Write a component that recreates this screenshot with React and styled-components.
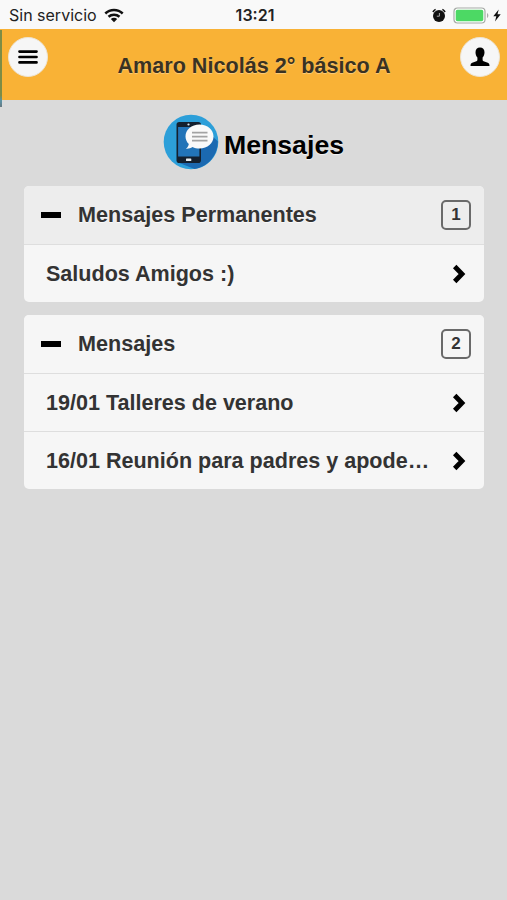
import React from "react";
import styled, { createGlobalStyle } from "styled-components";

const groups = [
  {
    title: "Mensajes Permanentes",
    active: true,
    items: ["Saludos Amigos :)"],
    count: 1,
  },
  {
    title: "Mensajes",
    active: false,
    items: ["19/01 Talleres de verano", "16/01 Reunión para padres y apode…"],
    count: 2,
  },
];

const WifiIcon = () => (
  <svg width="20" height="15" viewBox="0 0 20 15">
    <g fill="none" stroke="#111" strokeWidth="2.5">
      <path d="M1.3 5.5C6.2.8 13.8.8 18.7 5.5" />
      <path d="M4.5 8.8c3.2-2.9 7.8-2.9 11 0" />
    </g>
    <path d="M6.8 10.9c1.9-1.6 4.5-1.6 6.4 0L10 14.2z" fill="#111" />
  </svg>
);

const AlarmIcon = () => (
  <svg width="14" height="15" viewBox="0 0 14 15">
    <path
      d="M.9 4A7 7 0 0 1 3.6 1.4M10.4 1.4A7 7 0 0 1 13.100 4"
      fill="none"
      stroke="#111"
      strokeWidth="1.5"
    />
    <circle cx="7" cy="8" r="6" fill="#111" />
    <path d="M7.4 5v3.2H4.8" fill="none" stroke="#aaa" strokeWidth="1" />
  </svg>
);

const BatteryIcon = () => (
  <svg width="37" height="17" viewBox="0 0 37 17">
    <rect x="1" y="1" width="31" height="15" rx="3.5" fill="#fff" stroke="#a5aaa5" strokeWidth="1.2" />
    <rect x="2.7" y="2.8" width="27.6" height="11.4" rx="1.8" fill="#4cd964" />
    <path d="M34 6c1.8.7 1.8 4.3 0 5z" fill="#aaa" />
  </svg>
);

const BoltIcon = () => (
  <svg width="8" height="13" viewBox="0 0 8 13">
    <path d="M5.7.6L.3 7.3h3L2 12.6l5.7-7.3H4.5z" fill="#111" />
  </svg>
);

const MenuIcon = () => (
  <svg width="20" height="16" viewBox="0 0 20 16">
    <path d="M1.5 2.6h17M1.5 8h17M1.5 13.4h17" stroke="#000" strokeWidth="2.7" strokeLinecap="round" />
  </svg>
);

const UserIcon = () => (
  <svg width="20" height="20" viewBox="0 0 20 20">
    <path d="M10 .5c2.8 0 4.5 1.8 4.5 4.7 0 2.1-.7 4-1.9 5.4v2.3c0 .7.4 1.1 1 1.3l4.2 1.5c1.2.4 1.7 1.3 1.7 3.3H.5c0-2 .5-2.9 1.7-3.3l4.2-1.5c.6-.2 1-.6 1-1.3v-2.3C6.2 9.2 5.5 7.3 5.5 5.2 5.5 2.3 7.2.5 10 .5z" />
  </svg>
);

const MessagesLogo = () => (
  <svg width="56" height="56" viewBox="0 0 56 56">
    <circle cx="28" cy="28" r="27.3" fill="#2c9fd9" />
    <path d="M38 12l16.8 15.3A27.3 27.3 0 0 1 31.5 55L14 48z" fill="#1b69b1" />
    <rect x="13.5" y="8" width="24.5" height="41" rx="2.8" fill="#14202e" />
    <rect x="15.1" y="13" width="21.3" height="29.5" fill="#2274b8" />
    <circle cx="25.5" cy="10.5" r="1.1" fill="#dce6ec" />
    <rect x="23" y="44.5" width="5.3" height="2.5" rx=".6" fill="#e8edf0" />
    <path d="M36.5 10.5c8 0 14 5.2 14 12s-6 12-14 12c-2.6 0-4.9-.5-7-1.5-1.9 1.3-4 1.9-6.6 1.7 1.8-1.4 2.6-2.9 2.9-4.7-2.1-2-3.3-4.6-3.3-7.5 0-6.8 6-12 14-12z" fill="#fafafa" />
    <path d="M29 18.6h15.5M29 22.6h15.5M29 26.6h15.5" stroke="#a3a3a3" strokeWidth="1.6" />
  </svg>
);

const ChevronIcon = () => (
  <svg width="14" height="20" viewBox="0 0 14 20">
    <path d="M2.7 2.5L10 10l-7.3 7.5" fill="none" stroke="#000" strokeWidth="4.8" />
  </svg>
);

const App = () => {
  return (
    <Screen>
      <GlobalStyle />
      <StatusBar>
        <StatusSide>
          <Carrier>Sin servicio</Carrier>
          <WifiIcon />
        </StatusSide>
        <Clock>13:21</Clock>
        <StatusSide $end>
          <AlarmIcon />
          <BatteryIcon />
          <BoltIcon />
        </StatusSide>
      </StatusBar>
      <Header>
        <RoundButton aria-label="Menú">
          <MenuIcon />
        </RoundButton>
        <HeaderTitle>Amaro Nicolás 2° básico A</HeaderTitle>
        <RoundButton aria-label="Perfil">
          <UserIcon />
        </RoundButton>
        <PageEdge />
      </Header>
      <PageTitle>
        <MessagesLogo />
        <PageHeading>Mensajes</PageHeading>
      </PageTitle>
      <GroupList>
        {groups.map((group) => (
          <Group key={group.title}>
            <GroupHeader $active={group.active}>
              <Minus />
              <GroupTitle>{group.title}</GroupTitle>
              <Count>{group.count}</Count>
            </GroupHeader>
            {group.items.map((item) => (
              <MessageRow key={item}>
                <MessageText>{item}</MessageText>
                <ChevronIcon />
              </MessageRow>
            ))}
          </Group>
        ))}
      </GroupList>
    </Screen>
  );
};

const GlobalStyle = createGlobalStyle`
  * {
    box-sizing: border-box;
  }
  body {
    margin: 0;
    background-color: #dadada;
  }
  svg {
    display: block;
    flex-shrink: 0;
  }
`;
const Screen = styled.div`
  width: 100%;
  min-height: 100vh;
  background-color: #dadada;
  color: #333;
  font-family: "Liberation Sans", Arial, sans-serif;
`;
const StatusBar = styled.div`
  display: grid;
  grid-template-columns: 1fr auto 1fr;
  align-items: center;
  height: 29px;
  padding: 1px 6px 0 9px;
  background-color: #f9f9f9;
  color: #222;
  font-family: Inter, sans-serif;
`;
const StatusSide = styled.div`
  display: flex;
  align-items: center;
  justify-content: ${(props) => (props.$end ? "flex-end" : "flex-start")};
  gap: ${(props) => (props.$end ? "3px" : "7px")};

  svg:first-child {
    margin-right: 4px;
  }
`;
const Carrier = styled.span`
  font-size: 16px;
  white-space: nowrap;
`;
const Clock = styled.span`
  font-size: 16px;
  font-weight: 600;
`;
const Header = styled.header`
  position: relative;
  display: flex;
  justify-content: space-between;
  height: 71px;
  padding: 8px 7px 0 8px;
  background-color: #f9b236;
`;
const RoundButton = styled.button`
  display: flex;
  align-items: center;
  justify-content: center;
  width: 40px;
  height: 40px;
  padding: 0;
  border: 1px solid #eee4d2;
  border-radius: 50%;
  background-color: #f6f6f6;
`;
const HeaderTitle = styled.h1`
  margin: 16px 0 0;
  font-size: 21.6px;
  line-height: 26px;
  color: #3a3222;
  text-shadow: 0 1px 1px rgba(255, 255, 255, 0.35);
  white-space: nowrap;
`;
// sliver of the page that sits behind the panel
const PageEdge = styled.span`
  position: absolute;
  top: 1px;
  left: 0;
  width: 1.5px;
  height: 77px;
  background: linear-gradient(#7d8c45 0 85%, #5b93a8 92%, #66777f);
`;
const PageTitle = styled.div`
  display: flex;
  align-items: center;
  justify-content: center;
  gap: 5px;
  height: 86px;
  padding-bottom: 2px;
`;
const PageHeading = styled.h2`
  margin: 6px 0 0;
  font-size: 26.7px;
  line-height: 32px;
  color: #000;
  text-shadow: 0 1px 1px #f3f3f3;
`;
const GroupList = styled.div`
  display: flex;
  flex-direction: column;
  gap: 13px;
  padding: 0 23px 0 24px;
`;
const Group = styled.section`
  overflow: hidden;
  border-radius: 5px;
  background-color: #f6f6f6;
`;
const GroupHeader = styled.div`
  display: flex;
  align-items: center;
  height: 58px;
  padding: 0 13px 0 17px;
  background-color: ${(props) => (props.$active ? "#ededed" : "#f6f6f6")};
`;
const Minus = styled.span`
  width: 20px;
  height: 6px;
  margin-right: 17px;
  background-color: #000;
`;
const GroupTitle = styled.h3`
  flex: 1;
  margin: 0;
  font-size: 21.6px;
  line-height: 28px;
  text-shadow: 0 1px 0 #f9f9f9;
`;
const Count = styled.span`
  display: flex;
  align-items: center;
  justify-content: center;
  width: 30px;
  height: 30px;
  border: 2px solid #6a6a6a;
  border-radius: 5px;
  font-size: 17px;
  font-weight: bold;
`;
const MessageRow = styled.div`
  display: flex;
  align-items: center;
  justify-content: space-between;
  height: 58px;
  padding: 0 18px 0 22px;
  border-top: 1px solid #dedede;
`;
const MessageText = styled.span`
  font-size: 21.55px;
  font-weight: bold;
  line-height: 28px;
  white-space: nowrap;
`;

export default App;
